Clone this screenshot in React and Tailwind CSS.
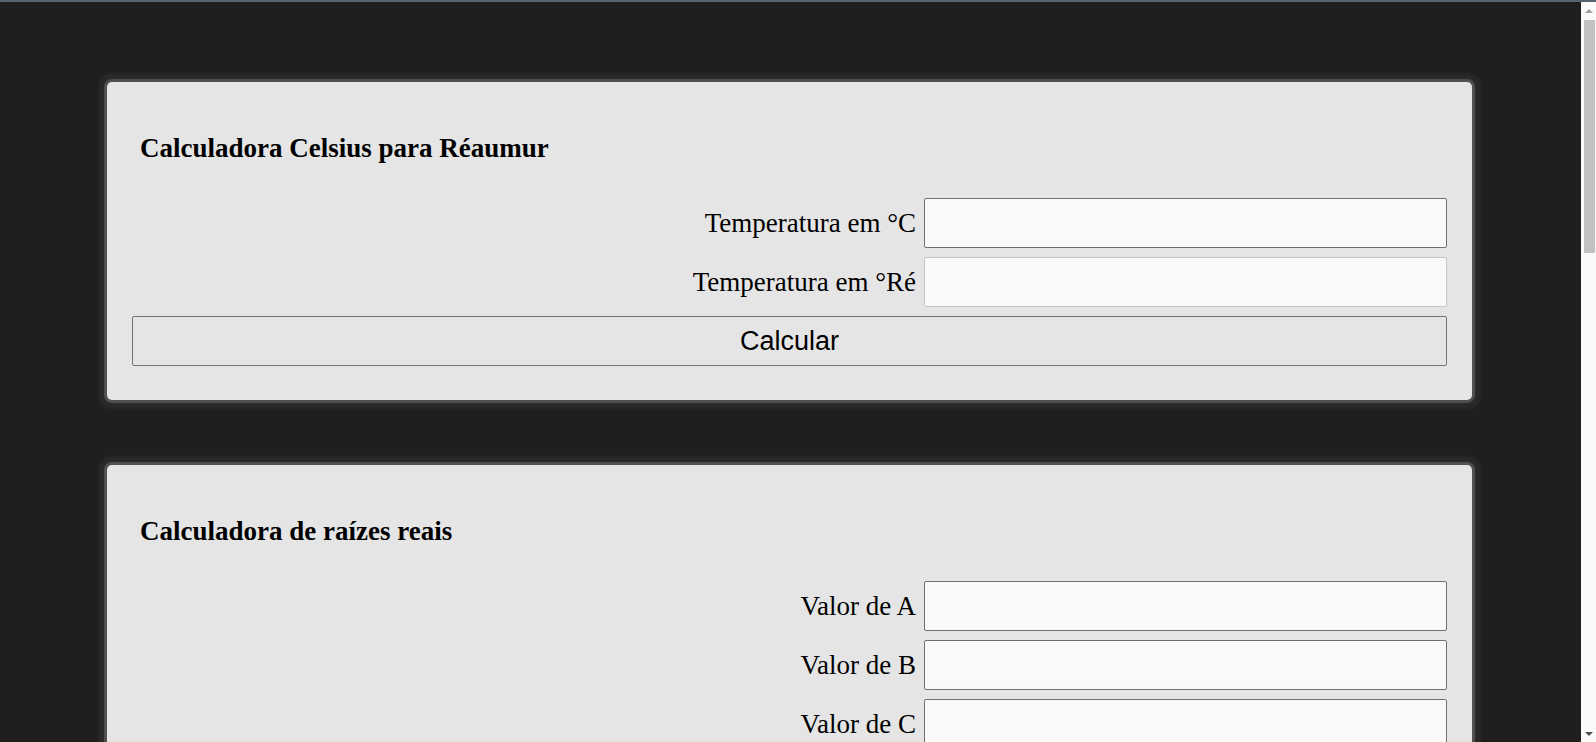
import React, { useState } from "react";

const serif = "font-['Liberation_Serif','Times_New_Roman',serif]";

const Row = ({ label, value, onChange, readOnly }) => (
  <div className="flex items-center justify-end gap-2 h-[50px]">
    <label className={`${serif} text-[27px] leading-[31px] text-black`}>
      {label}
    </label>
    <input
      type="text"
      value={value}
      onChange={onChange}
      readOnly={readOnly}
      className={`w-[523px] h-[50px] bg-[#fafafa] rounded-[2px] border outline-none px-2 text-[22px] ${
        readOnly ? "border-[#c4c4c4]" : "border-[#707070]"
      }`}
    />
  </div>
);

const Card = ({ title, children, className = "" }) => (
  <div
    className={`w-[1365px] ml-[107px] bg-[#e5e5e5] rounded-[5px] px-[25px] pt-[51px] pb-[34px] shadow-[0_0_1px_3px_#515151,0_0_2px_9px_#282828] ${className}`}
  >
    <h2 className={`${serif} font-bold text-[27px] leading-[31px] ml-2 text-black`}>
      {title}
    </h2>
    <div className="mt-[34px] flex flex-col gap-[9px]">{children}</div>
  </div>
);

const CalcButton = ({ onClick }) => (
  <button
    onClick={onClick}
    className="w-full h-[50px] bg-[#e5e5e5] border border-[#747474] rounded-[2px] font-['Liberation_Sans',Arial,sans-serif] text-[27px] text-black"
  >
    Calcular
  </button>
);

export default function App() {
  const [celsius, setCelsius] = useState("");
  const [reaumur, setReaumur] = useState("");
  const [a, setA] = useState("");
  const [b, setB] = useState("");
  const [c, setC] = useState("");

  const calcReaumur = () => {
    const n = parseFloat(celsius);
    if (!isNaN(n)) setReaumur(String(n * 0.8));
  };

  return (
    <div className="h-screen flex flex-col overflow-hidden">
      {/* window frame edge */}
      <div className="h-[2px] bg-[#56636f] shrink-0"></div>

      <div className="flex flex-1 min-h-0">
        <main className="flex-1 bg-[#1f1f1f] overflow-hidden">
          <Card title="Calculadora Celsius para Réaumur" className="mt-[80px]">
            <Row
              label="Temperatura em °C"
              value={celsius}
              onChange={(e) => setCelsius(e.target.value)}
            />
            <Row label="Temperatura em °Ré" value={reaumur} readOnly />
            <CalcButton onClick={calcReaumur} />
          </Card>

          <Card title="Calculadora de raízes reais" className="mt-[65px]">
            <Row label="Valor de A" value={a} onChange={(e) => setA(e.target.value)} />
            <Row label="Valor de B" value={b} onChange={(e) => setB(e.target.value)} />
            <Row label="Valor de C" value={c} onChange={(e) => setC(e.target.value)} />
          </Card>
        </main>

        {/* scrollbar */}
        <div className="w-[15px] bg-[#fafafa] flex flex-col items-center shrink-0">
          <div className="h-[18px] flex items-center justify-center">
            <div className="w-0 h-0 border-l-[4px] border-r-[4px] border-b-[4px] border-l-transparent border-r-transparent border-b-[#a3a3a3]"></div>
          </div>
          <div className="w-[11px] h-[233px] bg-[#c1c1c1] ml-[2px]"></div>
          <div className="flex-1"></div>
          <div className="h-[17px] flex items-center justify-center">
            <div className="w-0 h-0 border-l-[4px] border-r-[4px] border-t-[4px] border-l-transparent border-r-transparent border-t-[#505050]"></div>
          </div>
        </div>
      </div>
    </div>
  );
}
